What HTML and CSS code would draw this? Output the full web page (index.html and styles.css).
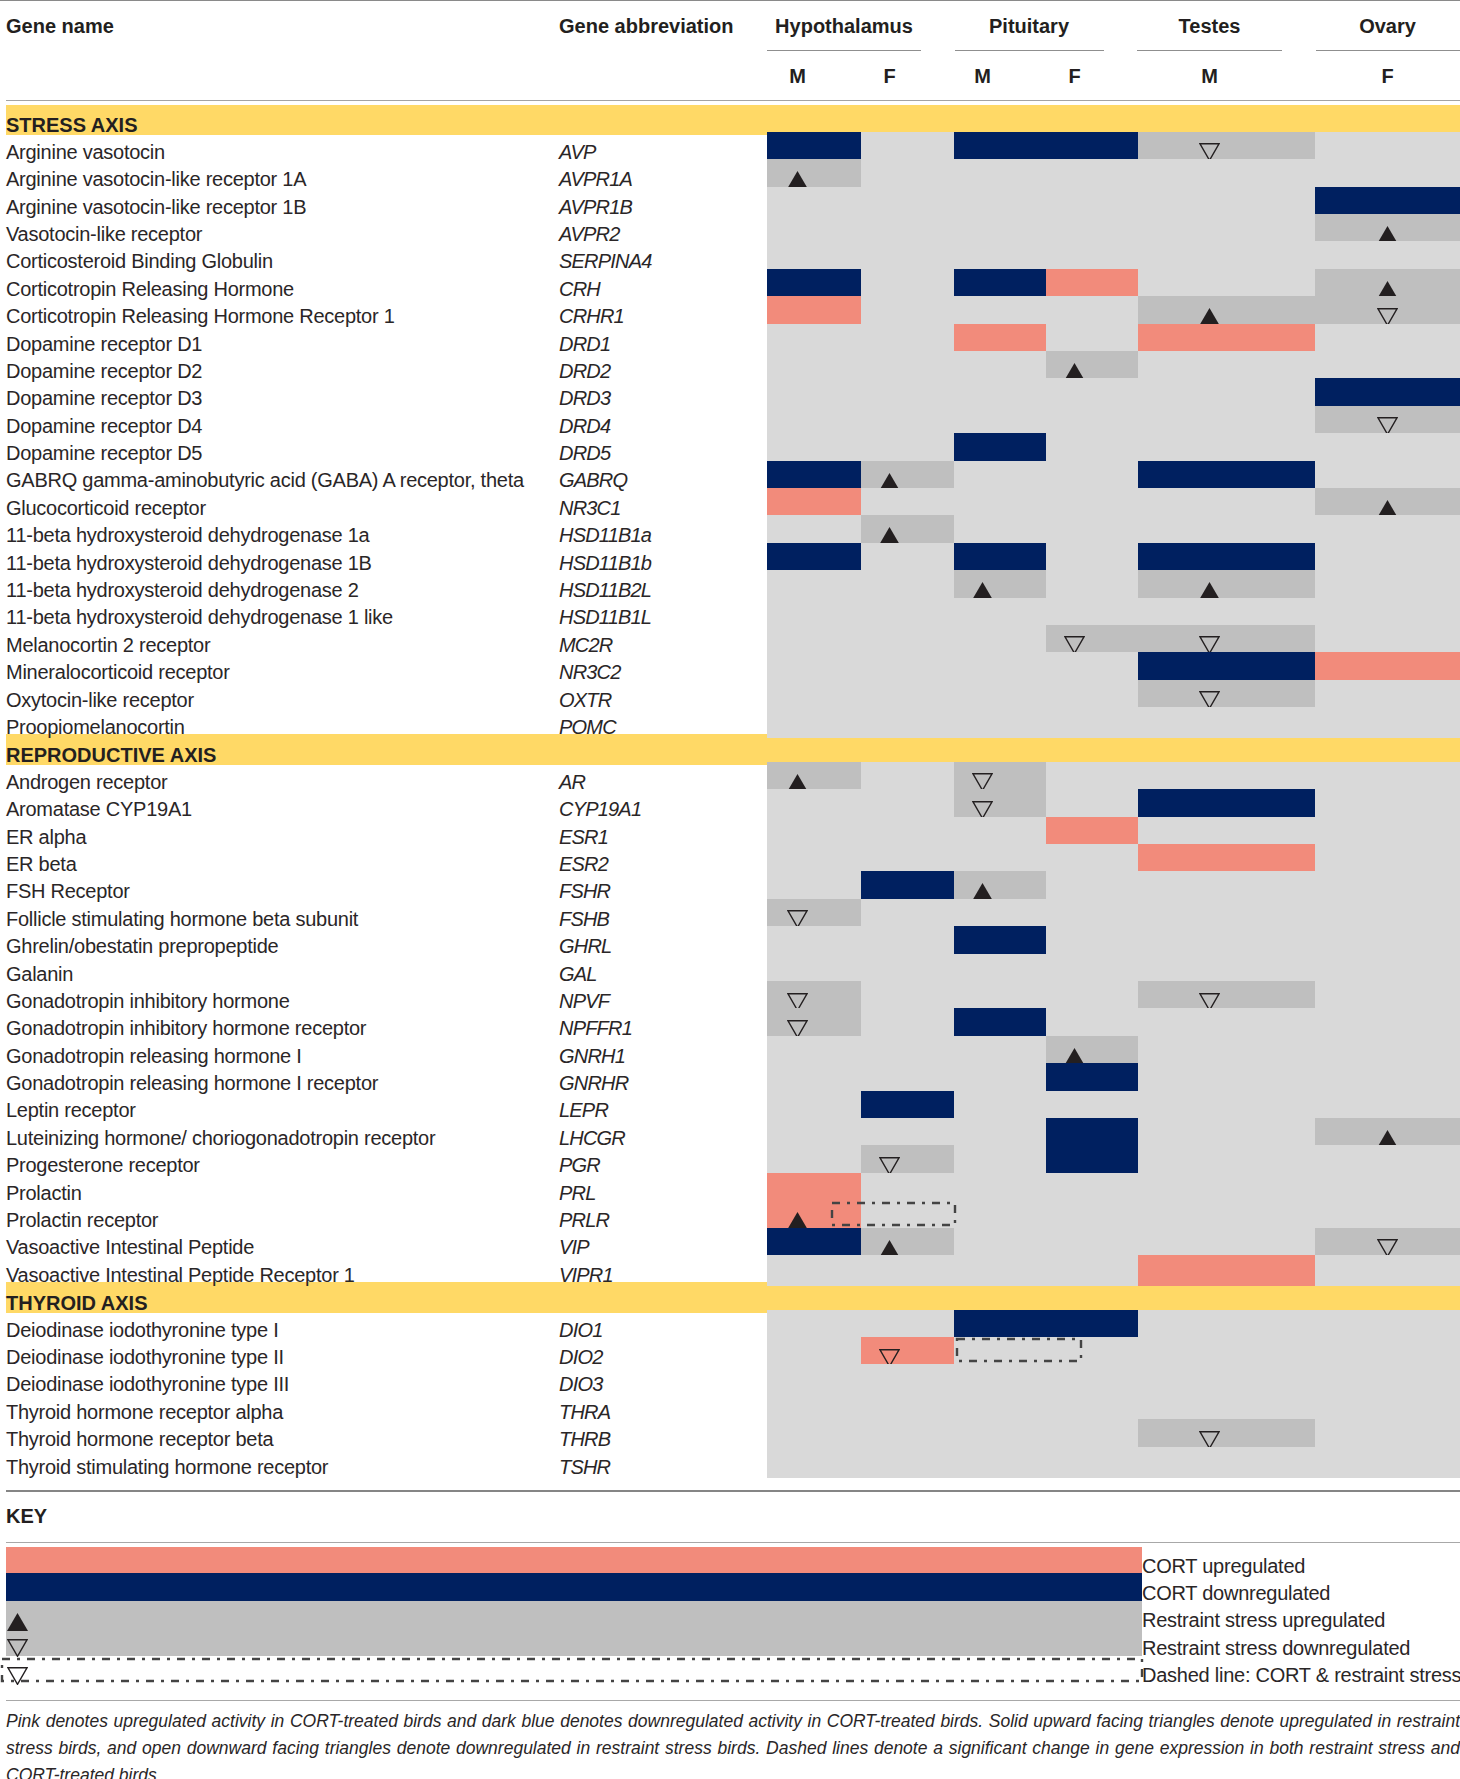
FILE: index.html
```html
<!DOCTYPE html>
<html>
<head>
<meta charset="utf-8">
<link rel="stylesheet" href="styles.css">
</head>
<body>
<div class="page">
  <div class="thead">
    <div class="hrow1">
      <div class="hc">Gene name</div>
      <div class="hc">Gene abbreviation</div>
      <div class="tissues">
        <div class="tissue">Hypothalamus</div>
        <div class="tissue">Pituitary</div>
        <div class="tissue">Testes</div>
        <div class="tissue">Ovary</div>
      </div>
    </div>
    <div class="hrow2">
      <div></div><div></div>
      <div><span>M</span></div><div><span>F</span></div>
      <div><span>M</span></div><div><span>F</span></div>
      <div><span>M</span></div><div><span>F</span></div>
    </div>
  </div>

  <div class="band first"><div>STRESS AXIS</div></div>
  <div class="row"><div class="nm">Arginine vasotocin</div><div class="ab">AVP</div><div class="c b"></div><div class="c"></div><div class="c b"></div><div class="c b"></div><div class="c g"><svg class="tri dn" viewBox="0 0 21 18"><path d="M1 .8H20L10.5 17.3Z"/></svg></div><div class="c"></div></div>
  <div class="row"><div class="nm">Arginine vasotocin-like receptor 1A</div><div class="ab">AVPR1A</div><div class="c g"><svg class="tri" viewBox="0 0 21 18"><path d="M10.5 0L21 18H0Z"/></svg></div><div class="c"></div><div class="c"></div><div class="c"></div><div class="c"></div><div class="c"></div></div>
  <div class="row"><div class="nm">Arginine vasotocin-like receptor 1B</div><div class="ab">AVPR1B</div><div class="c"></div><div class="c"></div><div class="c"></div><div class="c"></div><div class="c"></div><div class="c b"></div></div>
  <div class="row"><div class="nm">Vasotocin-like receptor</div><div class="ab">AVPR2</div><div class="c"></div><div class="c"></div><div class="c"></div><div class="c"></div><div class="c"></div><div class="c g"><svg class="tri" viewBox="0 0 21 18"><path d="M10.5 0L21 18H0Z"/></svg></div></div>
  <div class="row"><div class="nm">Corticosteroid Binding Globulin</div><div class="ab">SERPINA4</div><div class="c"></div><div class="c"></div><div class="c"></div><div class="c"></div><div class="c"></div><div class="c"></div></div>
  <div class="row"><div class="nm">Corticotropin Releasing Hormone</div><div class="ab">CRH</div><div class="c b"></div><div class="c"></div><div class="c b"></div><div class="c p"></div><div class="c"></div><div class="c g"><svg class="tri" viewBox="0 0 21 18"><path d="M10.5 0L21 18H0Z"/></svg></div></div>
  <div class="row"><div class="nm">Corticotropin Releasing Hormone Receptor 1</div><div class="ab">CRHR1</div><div class="c p"></div><div class="c"></div><div class="c"></div><div class="c"></div><div class="c g"><svg class="tri" viewBox="0 0 21 18"><path d="M10.5 0L21 18H0Z"/></svg></div><div class="c g"><svg class="tri dn" viewBox="0 0 21 18"><path d="M1 .8H20L10.5 17.3Z"/></svg></div></div>
  <div class="row"><div class="nm">Dopamine receptor D1</div><div class="ab">DRD1</div><div class="c"></div><div class="c"></div><div class="c p"></div><div class="c"></div><div class="c p"></div><div class="c"></div></div>
  <div class="row"><div class="nm">Dopamine receptor D2</div><div class="ab">DRD2</div><div class="c"></div><div class="c"></div><div class="c"></div><div class="c g"><svg class="tri" viewBox="0 0 21 18"><path d="M10.5 0L21 18H0Z"/></svg></div><div class="c"></div><div class="c"></div></div>
  <div class="row"><div class="nm">Dopamine receptor D3</div><div class="ab">DRD3</div><div class="c"></div><div class="c"></div><div class="c"></div><div class="c"></div><div class="c"></div><div class="c b"></div></div>
  <div class="row"><div class="nm">Dopamine receptor D4</div><div class="ab">DRD4</div><div class="c"></div><div class="c"></div><div class="c"></div><div class="c"></div><div class="c"></div><div class="c g"><svg class="tri dn" viewBox="0 0 21 18"><path d="M1 .8H20L10.5 17.3Z"/></svg></div></div>
  <div class="row"><div class="nm">Dopamine receptor D5</div><div class="ab">DRD5</div><div class="c"></div><div class="c"></div><div class="c b"></div><div class="c"></div><div class="c"></div><div class="c"></div></div>
  <div class="row"><div class="nm">GABRQ gamma-aminobutyric acid (GABA) A receptor, theta</div><div class="ab">GABRQ</div><div class="c b"></div><div class="c g"><svg class="tri" viewBox="0 0 21 18"><path d="M10.5 0L21 18H0Z"/></svg></div><div class="c"></div><div class="c"></div><div class="c b"></div><div class="c"></div></div>
  <div class="row"><div class="nm">Glucocorticoid receptor</div><div class="ab">NR3C1</div><div class="c p"></div><div class="c"></div><div class="c"></div><div class="c"></div><div class="c"></div><div class="c g"><svg class="tri" viewBox="0 0 21 18"><path d="M10.5 0L21 18H0Z"/></svg></div></div>
  <div class="row"><div class="nm">11-beta hydroxysteroid dehydrogenase 1a</div><div class="ab">HSD11B1a</div><div class="c"></div><div class="c g"><svg class="tri" viewBox="0 0 21 18"><path d="M10.5 0L21 18H0Z"/></svg></div><div class="c"></div><div class="c"></div><div class="c"></div><div class="c"></div></div>
  <div class="row"><div class="nm">11-beta hydroxysteroid dehydrogenase 1B</div><div class="ab">HSD11B1b</div><div class="c b"></div><div class="c"></div><div class="c b"></div><div class="c"></div><div class="c b"></div><div class="c"></div></div>
  <div class="row"><div class="nm">11-beta hydroxysteroid dehydrogenase 2</div><div class="ab">HSD11B2L</div><div class="c"></div><div class="c"></div><div class="c g"><svg class="tri" viewBox="0 0 21 18"><path d="M10.5 0L21 18H0Z"/></svg></div><div class="c"></div><div class="c g"><svg class="tri" viewBox="0 0 21 18"><path d="M10.5 0L21 18H0Z"/></svg></div><div class="c"></div></div>
  <div class="row"><div class="nm">11-beta hydroxysteroid dehydrogenase 1 like</div><div class="ab">HSD11B1L</div><div class="c"></div><div class="c"></div><div class="c"></div><div class="c"></div><div class="c"></div><div class="c"></div></div>
  <div class="row"><div class="nm">Melanocortin 2 receptor</div><div class="ab">MC2R</div><div class="c"></div><div class="c"></div><div class="c"></div><div class="c g"><svg class="tri dn" viewBox="0 0 21 18"><path d="M1 .8H20L10.5 17.3Z"/></svg></div><div class="c g"><svg class="tri dn" viewBox="0 0 21 18"><path d="M1 .8H20L10.5 17.3Z"/></svg></div><div class="c"></div></div>
  <div class="row"><div class="nm">Mineralocorticoid receptor</div><div class="ab">NR3C2</div><div class="c"></div><div class="c"></div><div class="c"></div><div class="c"></div><div class="c b"></div><div class="c p"></div></div>
  <div class="row"><div class="nm">Oxytocin-like receptor</div><div class="ab">OXTR</div><div class="c"></div><div class="c"></div><div class="c"></div><div class="c"></div><div class="c g"><svg class="tri dn" viewBox="0 0 21 18"><path d="M1 .8H20L10.5 17.3Z"/></svg></div><div class="c"></div></div>
  <div class="row"><div class="nm">Proopiomelanocortin</div><div class="ab">POMC</div><div class="c"></div><div class="c"></div><div class="c"></div><div class="c"></div><div class="c"></div><div class="c"></div></div>

  <div class="band"><div>REPRODUCTIVE AXIS</div></div>
  <div class="row"><div class="nm">Androgen receptor</div><div class="ab">AR</div><div class="c g"><svg class="tri" viewBox="0 0 21 18"><path d="M10.5 0L21 18H0Z"/></svg></div><div class="c"></div><div class="c g"><svg class="tri dn" viewBox="0 0 21 18"><path d="M1 .8H20L10.5 17.3Z"/></svg></div><div class="c"></div><div class="c"></div><div class="c"></div></div>
  <div class="row"><div class="nm">Aromatase CYP19A1</div><div class="ab">CYP19A1</div><div class="c"></div><div class="c"></div><div class="c g"><svg class="tri dn" viewBox="0 0 21 18"><path d="M1 .8H20L10.5 17.3Z"/></svg></div><div class="c"></div><div class="c b"></div><div class="c"></div></div>
  <div class="row"><div class="nm">ER alpha</div><div class="ab">ESR1</div><div class="c"></div><div class="c"></div><div class="c"></div><div class="c p"></div><div class="c"></div><div class="c"></div></div>
  <div class="row"><div class="nm">ER beta</div><div class="ab">ESR2</div><div class="c"></div><div class="c"></div><div class="c"></div><div class="c"></div><div class="c p"></div><div class="c"></div></div>
  <div class="row"><div class="nm">FSH Receptor</div><div class="ab">FSHR</div><div class="c"></div><div class="c b"></div><div class="c g"><svg class="tri" viewBox="0 0 21 18"><path d="M10.5 0L21 18H0Z"/></svg></div><div class="c"></div><div class="c"></div><div class="c"></div></div>
  <div class="row"><div class="nm">Follicle stimulating hormone beta subunit</div><div class="ab">FSHB</div><div class="c g"><svg class="tri dn" viewBox="0 0 21 18"><path d="M1 .8H20L10.5 17.3Z"/></svg></div><div class="c"></div><div class="c"></div><div class="c"></div><div class="c"></div><div class="c"></div></div>
  <div class="row"><div class="nm">Ghrelin/obestatin prepropeptide</div><div class="ab">GHRL</div><div class="c"></div><div class="c"></div><div class="c b"></div><div class="c"></div><div class="c"></div><div class="c"></div></div>
  <div class="row"><div class="nm">Galanin</div><div class="ab">GAL</div><div class="c"></div><div class="c"></div><div class="c"></div><div class="c"></div><div class="c"></div><div class="c"></div></div>
  <div class="row"><div class="nm">Gonadotropin inhibitory hormone</div><div class="ab">NPVF</div><div class="c g"><svg class="tri dn" viewBox="0 0 21 18"><path d="M1 .8H20L10.5 17.3Z"/></svg></div><div class="c"></div><div class="c"></div><div class="c"></div><div class="c g"><svg class="tri dn" viewBox="0 0 21 18"><path d="M1 .8H20L10.5 17.3Z"/></svg></div><div class="c"></div></div>
  <div class="row"><div class="nm">Gonadotropin inhibitory hormone receptor</div><div class="ab">NPFFR1</div><div class="c g"><svg class="tri dn" viewBox="0 0 21 18"><path d="M1 .8H20L10.5 17.3Z"/></svg></div><div class="c"></div><div class="c b"></div><div class="c"></div><div class="c"></div><div class="c"></div></div>
  <div class="row"><div class="nm">Gonadotropin releasing hormone I</div><div class="ab">GNRH1</div><div class="c"></div><div class="c"></div><div class="c"></div><div class="c g"><svg class="tri" viewBox="0 0 21 18"><path d="M10.5 0L21 18H0Z"/></svg></div><div class="c"></div><div class="c"></div></div>
  <div class="row"><div class="nm">Gonadotropin releasing hormone I receptor</div><div class="ab">GNRHR</div><div class="c"></div><div class="c"></div><div class="c"></div><div class="c b"></div><div class="c"></div><div class="c"></div></div>
  <div class="row"><div class="nm">Leptin receptor</div><div class="ab">LEPR</div><div class="c"></div><div class="c b"></div><div class="c"></div><div class="c"></div><div class="c"></div><div class="c"></div></div>
  <div class="row"><div class="nm">Luteinizing hormone/ choriogonadotropin receptor</div><div class="ab">LHCGR</div><div class="c"></div><div class="c"></div><div class="c"></div><div class="c b"></div><div class="c"></div><div class="c g"><svg class="tri" viewBox="0 0 21 18"><path d="M10.5 0L21 18H0Z"/></svg></div></div>
  <div class="row"><div class="nm">Progesterone receptor</div><div class="ab">PGR</div><div class="c"></div><div class="c g"><svg class="tri dn" viewBox="0 0 21 18"><path d="M1 .8H20L10.5 17.3Z"/></svg></div><div class="c"></div><div class="c b"></div><div class="c"></div><div class="c"></div></div>
  <div class="row"><div class="nm">Prolactin</div><div class="ab">PRL</div><div class="c p"></div><div class="c"></div><div class="c"></div><div class="c"></div><div class="c"></div><div class="c"></div></div>
  <div class="row"><div class="nm">Prolactin receptor</div><div class="ab">PRLR</div><div class="c p"><svg class="tri" viewBox="0 0 21 18"><path d="M10.5 0L21 18H0Z"/></svg></div><div class="c"></div><div class="c"></div><div class="c"></div><div class="c"></div><div class="c"></div><svg class="dash dash-prlr" viewBox="0 0 125 24"><rect x="1" y="1" width="123" height="22"/></svg></div>
  <div class="row"><div class="nm">Vasoactive Intestinal Peptide</div><div class="ab">VIP</div><div class="c b"></div><div class="c g"><svg class="tri" viewBox="0 0 21 18"><path d="M10.5 0L21 18H0Z"/></svg></div><div class="c"></div><div class="c"></div><div class="c"></div><div class="c g"><svg class="tri dn" viewBox="0 0 21 18"><path d="M1 .8H20L10.5 17.3Z"/></svg></div></div>
  <div class="row"><div class="nm">Vasoactive Intestinal Peptide Receptor 1</div><div class="ab">VIPR1</div><div class="c"></div><div class="c"></div><div class="c"></div><div class="c"></div><div class="c p"></div><div class="c"></div></div>

  <div class="band"><div>THYROID AXIS</div></div>
  <div class="row"><div class="nm">Deiodinase iodothyronine type I</div><div class="ab">DIO1</div><div class="c"></div><div class="c"></div><div class="c b"></div><div class="c b"></div><div class="c"></div><div class="c"></div></div>
  <div class="row"><div class="nm">Deiodinase iodothyronine type II</div><div class="ab">DIO2</div><div class="c"></div><div class="c p"><svg class="tri dn" viewBox="0 0 21 18"><path d="M1 .8H20L10.5 17.3Z"/></svg></div><div class="c"></div><div class="c"></div><div class="c"></div><div class="c"></div><svg class="dash dash-dio2" viewBox="0 0 126 24"><rect x="1" y="1" width="124" height="22"/></svg></div>
  <div class="row"><div class="nm">Deiodinase iodothyronine type III</div><div class="ab">DIO3</div><div class="c"></div><div class="c"></div><div class="c"></div><div class="c"></div><div class="c"></div><div class="c"></div></div>
  <div class="row"><div class="nm">Thyroid hormone receptor alpha</div><div class="ab">THRA</div><div class="c"></div><div class="c"></div><div class="c"></div><div class="c"></div><div class="c"></div><div class="c"></div></div>
  <div class="row"><div class="nm">Thyroid hormone receptor beta</div><div class="ab">THRB</div><div class="c"></div><div class="c"></div><div class="c"></div><div class="c"></div><div class="c g"><svg class="tri dn" viewBox="0 0 21 18"><path d="M1 .8H20L10.5 17.3Z"/></svg></div><div class="c"></div></div>
  <div class="row"><div class="nm">Thyroid stimulating hormone receptor</div><div class="ab">TSHR</div><div class="c"></div><div class="c"></div><div class="c"></div><div class="c"></div><div class="c"></div><div class="c"></div></div>

  <div class="keyhead">KEY</div>
  <div class="key">
    <div class="kbars">
      <div class="kb p"></div>
      <div class="kb b"></div>
      <div class="kb g">
        <svg class="tri" viewBox="0 0 21 18"><path d="M10.5 0L21 18H0Z"/></svg>
        <svg class="tri dn" viewBox="0 0 21 18"><path d="M1 .8H20L10.5 17.3Z"/></svg>
      </div>
      <div class="kdash">
        <svg class="dash dash-key" viewBox="0 0 1142 24"><rect x="1" y="1" width="1140" height="22"/></svg>
        <svg class="tri dn" viewBox="0 0 21 18"><path d="M1 .8H20L10.5 17.3Z"/></svg>
      </div>
    </div>
    <div class="klabels">
      <div class="kl">CORT upregulated</div>
      <div class="kl">CORT downregulated</div>
      <div class="kl">Restraint stress upregulated</div>
      <div class="kl">Restraint stress downregulated</div>
      <div class="kl">Dashed line: CORT &amp; restraint stress</div>
    </div>
  </div>

  <div class="caption">
    <span class="jl">Pink denotes upregulated activity in CORT-treated birds and dark blue denotes downregulated activity in CORT-treated birds. Solid upward facing triangles denote upregulated in restraint</span>
    <span class="jl">stress birds, and open downward facing triangles denote downregulated in restraint stress birds. Dashed lines denote a significant change in gene expression in both restraint stress and</span>
    <span class="ll">CORT-treated birds.</span>
  </div>
</div>
</body>
</html>
```
FILE: styles.css
```css
* { box-sizing: border-box; margin: 0; padding: 0; }
html, body { background: #fff; }
body {
  margin: 0;
  color: #231f20;
  font-family: "Liberation Sans", Arial, sans-serif;
  font-size: 20px;
  overflow: hidden;
}
.page {
  width: 1460px;
  padding-left: 6px;
  border-top: 1px solid #8a8a8a;
}

/* header */
.hrow1 {
  display: grid;
  grid-template-columns: 553px 208px 692.5px;
  height: 50px;
}
.hc, .tissue {
  font-weight: bold;
  font-size: 20px;
  line-height: 20px;
  padding-top: 15px;
  white-space: nowrap;
}
.tissues {
  display: grid;
  grid-template-columns: 154px 149px 145px 144px;
  column-gap: 33.5px;
}
.tissue {
  text-align: center;
  border-bottom: 1px solid #8f8f8f;
}
.hrow2 {
  display: grid;
  grid-template-columns: 553px 208px 94px 93px 92px 92px 177px 145px;
  height: 50px;
  border-bottom: 1px solid #a3a3a3;
}
.hrow2 span {
  display: block;
  width: 21px;
  text-align: center;
  font-weight: bold;
  line-height: 20px;
  padding-top: 15.4px;
}

/* data rows */
.row {
  display: grid;
  grid-template-columns: 553px 208px 94px 93px 92px 92px 177px 145px;
  height: 27.4px;
  position: relative;
}
.nm, .ab, .kl {
  font-size: 20px;
  line-height: 22px;
  padding-top: 8.9px;
  letter-spacing: -0.25px;
  white-space: nowrap;
  color: #2a2627;
}
.ab { font-style: italic; letter-spacing: -0.8px; }
.c { background: #d9d9d9; }
.p { background: #f28b7b !important; }
.b { background: #002060 !important; }
.g { background: #bfbfbf !important; }

.tri {
  display: block;
  position: relative;
  width: 21px;
  height: 18px;
  margin-top: 12px;
  fill: #231f20;
}
.tri.dn { margin-top: 11.5px; }
.tri.dn path { fill: none; stroke: #231f20; stroke-width: 1.4; }

.row > :nth-child(3) .tri, .hrow2 > :nth-child(3) span { margin-left: 20px; }
.row > :nth-child(4) .tri, .hrow2 > :nth-child(4) span,
.row > :nth-child(5) .tri, .hrow2 > :nth-child(5) span,
.row > :nth-child(6) .tri, .hrow2 > :nth-child(6) span { margin-left: 18px; }
.row > :nth-child(7) .tri, .hrow2 > :nth-child(7) span { margin-left: 61px; }
.row > :nth-child(8) .tri, .hrow2 > :nth-child(8) span { margin-left: 62px; }

/* section bands */
.band {
  display: grid;
  height: 27.4px;
}
.band.first { margin-top: 3.5px; }
.band > div {
  background: #ffd966;
  font-weight: bold;
  font-size: 20px;
  line-height: 20px;
  padding-top: 10.3px;
}

/* dashed outlines */
.dash {
  position: absolute;
  display: block;
  overflow: visible;
}
.dash rect {
  fill: none;
  stroke: #444;
  stroke-width: 2.4;
  stroke-dasharray: 8 7 3 7;
}
.dash-prlr { left: 825px; top: 1.5px; width: 125px; height: 24px; }
.dash-dio2 { left: 950px; top: 0.8px; width: 126px; height: 24px; }

/* key */
.keyhead {
  margin-top: 16px;
  border-top: 2px solid #858585;
  border-bottom: 1px solid #a8a8a8;
  height: 53px;
  font-weight: bold;
  line-height: 20px;
  padding-top: 14.4px;
}
.key {
  display: grid;
  grid-template-columns: 1136px 318px;
  margin-top: 3.7px;
}
.kb { display: flow-root; }
.kb.p { height: 26.6px; }
.kb.b { height: 27.5px; }
.kb.g { height: 55px; }
.kb .tri { margin-left: 1px; }
.kb.g .tri.dn { margin-top: 8.2px; }
.kdash {
  display: flow-root;
  position: relative;
  height: 23px;
  margin-top: 2px;
}
.dash-key { left: -5px; top: 0; width: 1142px; height: 24px; }
.kdash .tri { margin-left: 1px; margin-top: 9.3px; }
.kl { height: 27.4px; padding-top: 7.9px; }

/* caption */
.caption {
  margin-top: 16px;
  border-top: 1px solid #a8a8a8;
  padding-top: 7.6px;
  font-style: italic;
  font-size: 17.5px;
  line-height: 27px;
  color: #2a2627;
}
.caption span { display: block; white-space: nowrap; }
.caption .jl { text-align: justify; text-align-last: justify; white-space: normal; }
```
